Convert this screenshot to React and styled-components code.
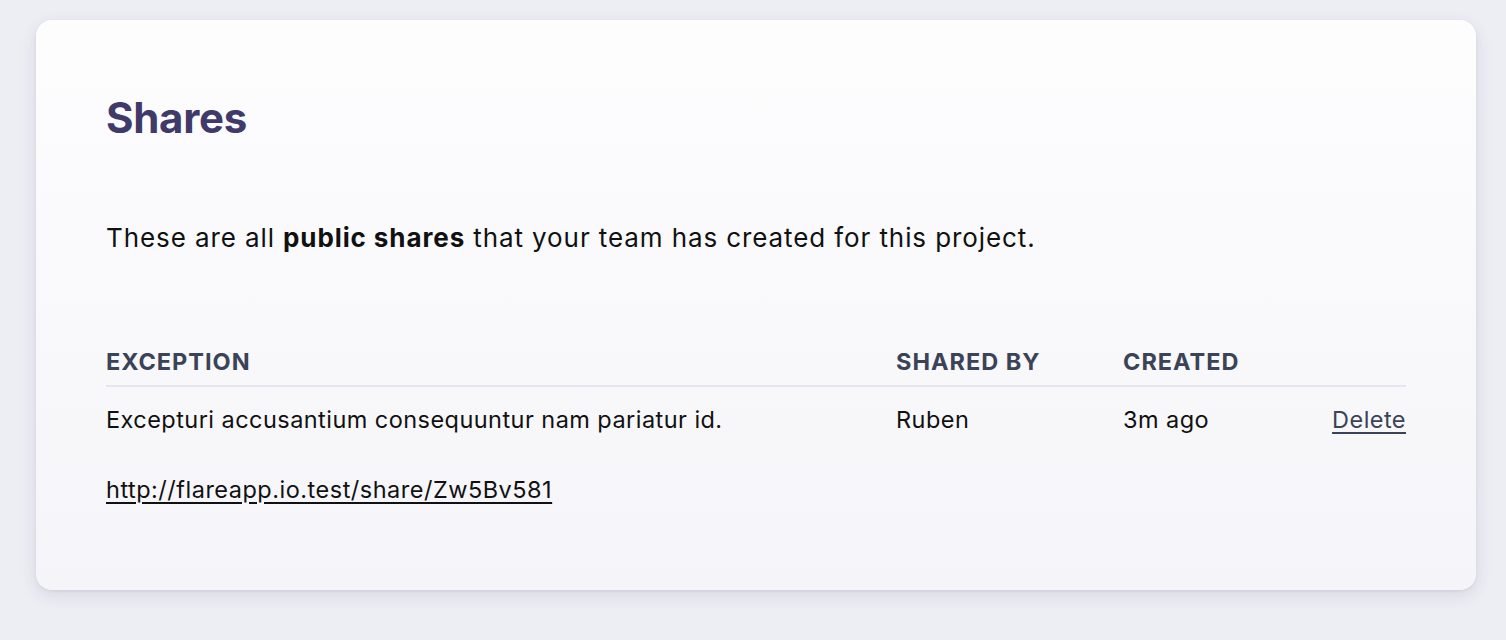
import React from 'react';
import styled, { createGlobalStyle } from 'styled-components';

const Global = createGlobalStyle`
  body {
    margin: 0;
    background: #ededf4;
    font-family: Inter, "Noto Sans", sans-serif;
    color: #111;
  }
`;

const Page = styled.div`
  padding: 20px 30px 50px 36px;
`;

const Card = styled.div`
  height: 570px;
  box-sizing: border-box;
  padding: 72px 70px 0;
  border-radius: 16px;
  background: linear-gradient(180deg, #fdfdfe 0%, #f5f5f9 100%);
  box-shadow: 0 5px 16px rgba(60, 60, 100, 0.12), 0 1px 3px rgba(60, 60, 100, 0.08);
`;

const Title = styled.h2`
  margin: 0;
  font-size: 42px;
  line-height: 52px;
  font-weight: 700;
  color: #403a6a;
  letter-spacing: -0.3px;
`;

const Intro = styled.p`
  margin: 76px 0 0;
  font-size: 26px;
  line-height: 36px;
  letter-spacing: 0.9px;
  color: #111;
  strong { font-weight: 700; }
`;

const Table = styled.div`
  margin-top: 91px;
  display: grid;
  grid-template-columns: 790px 227px 1fr auto;
`;

const Head = styled.div`
  font-size: 23.5px;
  font-weight: 700;
  line-height: 30px;
  padding-bottom: 8px;
  color: #3a4357;
  text-transform: uppercase;
  letter-spacing: 1px;
  border-bottom: 2px solid #e6e7ee;
`;

const Cell = styled.div`
  font-size: 23.5px;
  line-height: 30px;
  letter-spacing: 0.45px;
  padding-top: 18px;
  text-align: ${p => (p.$right ? 'right' : 'left')};
`;

const DeleteLink = styled.a`
  color: #3a4357;
  text-decoration: underline;
  text-underline-offset: 4px;
  cursor: pointer;
`;

const ShareLink = styled.a`
  display: inline-block;
  margin-top: 40px;
  font-size: 23.5px;
  line-height: 30px;
  letter-spacing: 0.5px;
  color: #111;
  text-decoration: underline;
  text-underline-offset: 4px;
`;

export default function App() {
  return (
    <>
      <Global />
      <Page>
        <Card>
          <Title>Shares</Title>
          <Intro>
            These are all <strong>public shares</strong> that your team has created for this project.
          </Intro>
          <Table>
            <Head>Exception</Head>
            <Head>Shared by</Head>
            <Head>Created</Head>
            <Head />
            <Cell>Excepturi accusantium consequuntur nam pariatur id.</Cell>
            <Cell>Ruben</Cell>
            <Cell>3m ago</Cell>
            <Cell $right>
              <DeleteLink>Delete</DeleteLink>
            </Cell>
          </Table>
          <ShareLink href="#">http://flareapp.io.test/share/Zw5Bv581</ShareLink>
        </Card>
      </Page>
    </>
  );
}
